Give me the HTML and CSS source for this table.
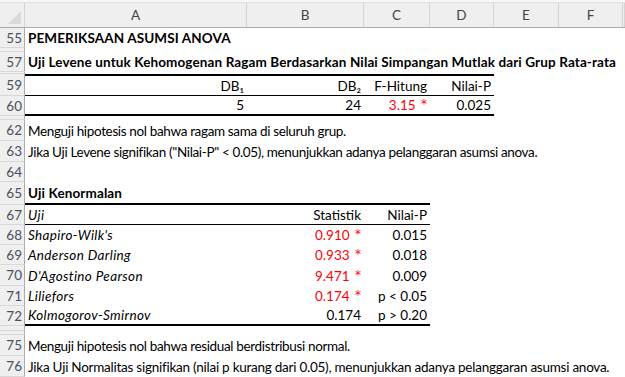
FILE: index.html
```html
<!DOCTYPE html>
<html>
<head>
<meta charset="utf-8">
<link rel="stylesheet" href="styles.css">
</head>
<body>
<div class="sheet">
  <div class="topstrip"></div>
  <div class="row colhead">
    <div class="corner"><svg width="24" height="24" viewBox="0 0 24 24"><polygon points="21,8 21,21 8,21" fill="#dadada"/></svg></div>
    <div class="ch">A</div><div class="ch">B</div><div class="ch">C</div><div class="ch">D</div><div class="ch">E</div><div class="ch">F</div><div class="ch"></div>
  </div>

  <div class="row h20"><div class="rh">55</div><div class="c b">PEMERIKSAAN ASUMSI ANOVA</div><div></div><div></div><div></div><div></div><div></div><div></div></div>
  <div class="row h4"><div class="rh"></div></div>
  <div class="row h20"><div class="rh">57</div><div class="c b">Uji Levene untuk Kehomogenan Ragam Berdasarkan Nilai Simpangan Mutlak dari Grup Rata-rata</div><div></div><div></div><div></div><div></div><div></div><div></div></div>
  <div class="row h2"><div class="rh"></div></div>
  <div class="row h22"><div class="rh">59</div><div class="c r t2 b1">DB₁</div><div class="c r t2 b1">DB₂</div><div class="c r t2 b1">F-Hitung</div><div class="c r t2 b1">Nilai-P</div><div></div><div></div><div></div></div>
  <div class="row h20"><div class="rh">60</div><div class="c r b2">5</div><div class="c r b2">24</div><div class="c r b2 red">3.15&nbsp;<span class="ast">*</span></div><div class="c r b2">0.025</div><div></div><div></div><div></div></div>
  <div class="row h4"><div class="rh"></div></div>
  <div class="row h21"><div class="rh">62</div><div class="c">Menguji hipotesis nol bahwa ragam sama di seluruh grup.</div><div></div><div></div><div></div><div></div><div></div><div></div></div>
  <div class="row h21"><div class="rh">63</div><div class="c">Jika Uji Levene signifikan ("Nilai-P" &lt; 0.05), menunjukkan adanya pelanggaran asumsi anova.</div><div></div><div></div><div></div><div></div><div></div><div></div></div>
  <div class="row h20"><div class="rh">64</div></div>
  <div class="row h23"><div class="rh">65</div><div class="c b b2">Uji Kenormalan</div><div class="c b2"></div><div class="c b2"></div><div></div><div></div><div></div><div></div></div>
  <div class="row h20"><div class="rh">67</div><div class="c i b1">Uji</div><div class="c r b1">Statistik</div><div class="c r b1">Nilai-P</div><div></div><div></div><div></div><div></div></div>
  <div class="row h20"><div class="rh">68</div><div class="c i">Shapiro-Wilk's</div><div class="c r red">0.910&nbsp;<span class="ast">*</span></div><div class="c r">0.015</div><div></div><div></div><div></div><div></div></div>
  <div class="row h20"><div class="rh">69</div><div class="c i">Anderson Darling</div><div class="c r red">0.933&nbsp;<span class="ast">*</span></div><div class="c r">0.018</div><div></div><div></div><div></div><div></div></div>
  <div class="row h21"><div class="rh">70</div><div class="c i">D'Agostino Pearson</div><div class="c r red">9.471&nbsp;<span class="ast">*</span></div><div class="c r">0.009</div><div></div><div></div><div></div><div></div></div>
  <div class="row h20"><div class="rh">71</div><div class="c i">Liliefors</div><div class="c r red">0.174&nbsp;<span class="ast">*</span></div><div class="c r">p &lt; 0.05</div><div></div><div></div><div></div><div></div></div>
  <div class="row h20"><div class="rh">72</div><div class="c i b2">Kolmogorov-Smirnov</div><div class="c r b2">0.174</div><div class="c r b2">p &gt; 0.20</div><div></div><div></div><div></div><div></div></div>
  <div class="row h5"><div class="rh"></div></div>
  <div class="row h4"><div class="rh"></div></div>
  <div class="row h21"><div class="rh">75</div><div class="c">Menguji hipotesis nol bahwa residual berdistribusi normal.</div><div></div><div></div><div></div><div></div><div></div><div></div></div>
  <div class="row h21"><div class="rh">76</div><div class="c wide">Jika Uji Normalitas signifikan (nilai p kurang dari 0.05), menunjukkan adanya pelanggaran asumsi anova.</div><div></div><div></div><div></div><div></div><div></div><div></div></div>
  <div class="row h20"><div class="rh"></div></div>
</div>
</body>
</html>
```

FILE: styles.css
```css
html, body {
  margin: 0;
  padding: 0;
  background: #ffffff;
  overflow: hidden;
}
.sheet {
  width: 625px;
  height: 377px;
  overflow: hidden;
  font-family: "Lato", "Liberation Sans", sans-serif;
  font-size: 13.5px;
  color: #000;
}
.topstrip {
  height: 3px;
  background: #f7f7f7;
  border-bottom: 1px solid #e2e2e2;
  box-sizing: border-box;
}
.row {
  display: grid;
  grid-template-columns: 25px 222px 117px 66px 64px 65px 64px 2px;
}
.colhead {
  height: 25px;
  background: #efefef;
  border-bottom: 1px solid #ababab;
  box-sizing: border-box;
}
.corner {
  border-right: 1px solid #d4d4d4;
  display: flex;
  align-items: flex-end;
  justify-content: flex-end;
  overflow: hidden;
}
.ch {
  border-right: 1px solid #d4d4d4;
  display: flex;
  align-items: center;
  justify-content: center;
  color: #444;
  font-size: 13.5px;
}
.rh {
  background: #efefef;
  border-right: 1px solid #ababab;
  border-bottom: 1px solid #d8d8d8;
  box-sizing: border-box;
  color: #4a5060;
  display: flex;
  align-items: center;
  justify-content: flex-end;
  padding-right: 2px;
  font-size: 13.5px;
}
.h2 { height: 2px; }
.h4 { height: 4px; }
.h5 { height: 5px; }
.h20 { height: 20px; }
.h21 { height: 21px; }
.h22 { height: 22px; }
.h23 { height: 23px; }
.c {
  display: flex;
  align-items: center;
  padding: 0 3px;
  white-space: nowrap;
  overflow: visible;
  box-sizing: border-box;
  min-width: 0;
  letter-spacing: -0.35px;
}
.wide { letter-spacing: -0.25px; }
.r { justify-content: flex-end; letter-spacing: 0; }
.b { font-weight: bold; letter-spacing: 0.12px; }
.i { font-style: italic; letter-spacing: 0.35px; }
.red { color: #ff0000; }
.ast {
  font-family: "DejaVu Sans", sans-serif;
  font-size: 12px;
  position: relative;
  top: -1px;
  margin-left: 2px;
}
.t2 { border-top: 2px solid #000; }
.b1 { border-bottom: 1px solid #000; }
.b2 { border-bottom: 2px solid #000; }
```
